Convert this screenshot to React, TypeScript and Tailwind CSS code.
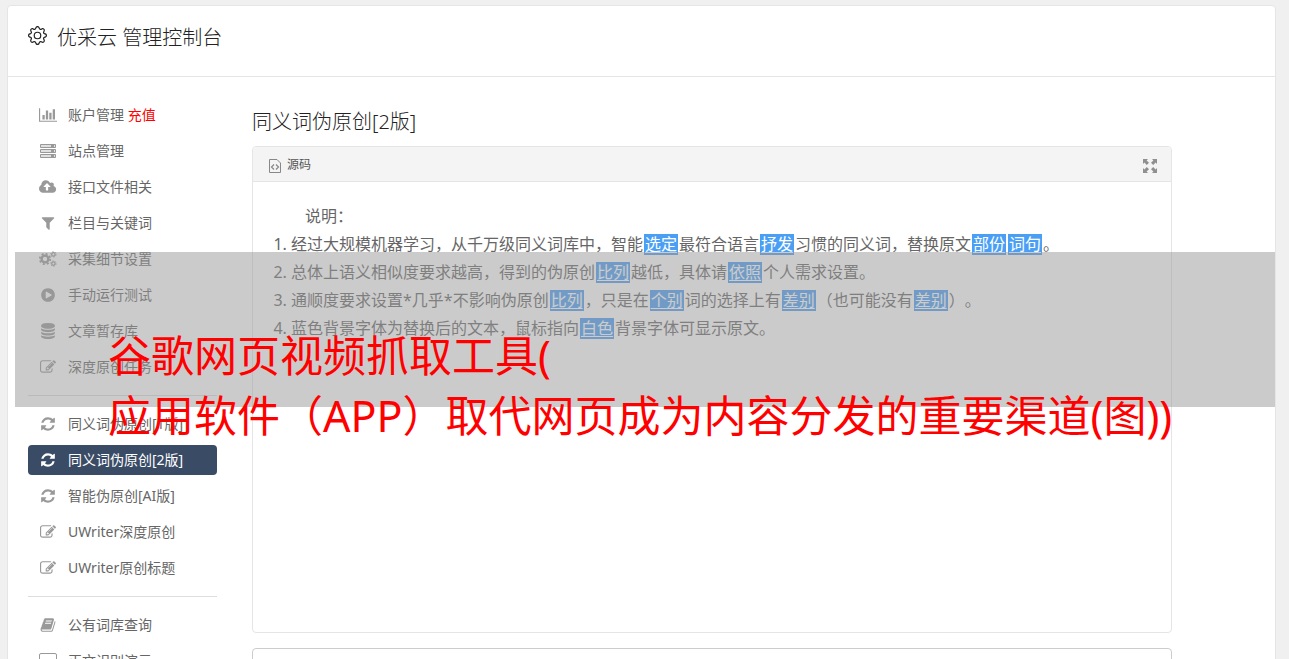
import React from "react";
import { BsGear } from "react-icons/bs";

type IconProps = {
  name: string;
};

const icons: Record<string, { width: number; path: string }> = {
  chart: {
    width: 2048,
    path: "M640 896v512h-256v-512h256zm384-512v1024h-256v-1024h256zm1024 1152v128h-2048v-1536h128v1408h1920zm-640-896v768h-256v-768h256zm384-384v1152h-256v-1152h256z",
  },
  cloud: {
    width: 1920,
    path: "M1280 864q0-14-9-23l-352-352q-9-9-23-9t-23 9l-351 351q-10 12-10 24 0 14 9 23t23 9h224v352q0 13 9.5 22.5t22.5 9.5h192q13 0 22.5-9.5t9.5-22.5v-352h224q13 0 22.5-9.5t9.5-22.5zm640 288q0 159-112.5 271.5t-271.5 112.5h-1088q-185 0-316.5-131.5t-131.5-316.5q0-130 70-240t188-165q-2-30-2-43 0-212 150-362t362-150q156 0 285.5 87t188.5 231q71-62 166-62 106 0 181 75t75 181q0 76-41 138 130 31 213.5 135.5t83.5 238.5z",
  },
  filter: {
    width: 1792,
    path: "M1595 295q17 41-14 70l-493 493v742q0 42-39 59-13 5-25 5-27 0-45-19l-256-256q-19-19-19-45v-486l-493-493q-31-29-14-70 17-39 59-39h1280q42 0 59 39z",
  },
  play: {
    width: 1792,
    path: "M896 128q209 0 385.5 103t279.5 279.5 103 385.5-103 385.5-279.5 279.5-385.5 103-385.5-103-279.5-279.5-103-385.5 103-385.5 279.5-279.5 385.5-103zm384 823q32-18 32-55t-32-55l-544-320q-31-19-64-1-32 19-32 56v640q0 37 32 56 16 8 32 8 17 0 32-9z",
  },
  database: {
    width: 1792,
    path: "M896 768q237 0 443-43t325-127v170q0 69-103 128t-280 93.5-385 34.5-385-34.5-280-93.5-103-128v-170q119 84 325 127t443 43zm0 768q237 0 443-43t325-127v170q0 69-103 128t-280 93.5-385 34.5-385-34.5-280-93.5-103-128v-170q119 84 325 127t443 43zm0-384q237 0 443-43t325-127v170q0 69-103 128t-280 93.5-385 34.5-385-34.5-280-93.5-103-128v-170q119 84 325 127t443 43zm0-1152q208 0 385 34.5t280 93.5 103 128v128q0 69-103 128t-280 93.5-385 34.5-385-34.5-280-93.5-103-128v-128q0-69 103-128t280-93.5 385-34.5z",
  },
  edit: {
    width: 1792,
    path: "M888 1184l116-116-152-152-116 116v56h96v96h56zm440-720q-16-16-33 1l-350 350q-17 17-1 33t33-1l350-350q17-17 1-33zm80 594v190q0 119-84.5 203.5t-203.5 84.5h-832q-119 0-203.5-84.5t-84.5-203.5v-832q0-119 84.5-203.5t203.5-84.5h832q63 0 117 25 15 7 18 23 3 17-9 29l-49 49q-14 14-32 8-23-6-45-6h-832q-66 0-113 47t-47 113v832q0 66 47 113t113 47h832q66 0 113-47t47-113v-126q0-13 9-22l64-64q15-15 35-7t20 29zm-96-738l288 288-672 672h-288v-288zm444 132l-92 92-288-288 92-92q28-28 68-28t68 28l152 152q28 28 28 68t-28 68z",
  },
  refresh: {
    width: 1792,
    path: "M1639 1056q0 5-1 7-64 268-268 434.5t-478 166.5q-146 0-282.5-55t-243.5-157l-129 129q-19 19-45 19t-45-19-19-45v-448q0-26 19-45t45-19h448q26 0 45 19t19 45-19 45l-137 137q71 66 161 102t187 36q134 0 250-65t186-179q11-17 53-117 8-23 30-23h192q13 0 22.5 9.5t9.5 22.5zm25-800v448q0 26-19 45t-45 19h-448q-26 0-45-19t-19-45 19-45l138-138q-148-137-349-137-134 0-250 65t-186 179q-11 17-53 117-8 23-30 23h-199q-13 0-22.5-9.5t-9.5-22.5v-7q65-268 270-434.5t480-166.5q146 0 284 55.5t245 156.5l130-129q19-19 45-19t45 19 19 45z",
  },
  book: {
    width: 1792,
    path: "M1703 478q40 57 18 129l-275 906q-19 64-76.5 107.5t-122.5 43.5h-923q-77 0-148.5-53.5t-99.5-131.5q-24-67-2-127 0-4 3-27t4-37q1-8-3-21.5t-3-19.5q2-11 8-21t16.5-23.5 16.5-23.5q23-38 45-91.5t30-91.5q3-10 .5-30t-.5-28q3-11 17-28t17-23q21-36 42-92t25-90q1-9-2.5-32t.5-28q4-13 22-30.5t22-22.5q19-26 42.5-84.5t27.5-96.5q1-8-3-25.5t-2-26.5q2-8 9-18t18-23 17-21q8-12 16.5-30.5t15-35 16-36 19.5-32 26.5-23.5 36-11.5 47.5 5.5l-1 3q38-9 51-9h761q74 0 114 56t18 130l-274 906q-36 119-71.5 153.5t-128.5 34.5h-869q-27 0-38 15-11 16-1 43 24 70 144 70h923q29 0 56-15.5t35-41.5l300-987q7-22 5-57 38 15 59 43zm-1064 2q-4 13 2 22.5t20 9.5h608q13 0 25.5-9.5t16.5-22.5l21-64q4-13-2-22.5t-20-9.5h-608q-13 0-25.5 9.5t-16.5 22.5zm-83 256q-4 13 2 22.5t20 9.5h608q13 0 25.5-9.5t16.5-22.5l21-64q4-13-2-22.5t-20-9.5h-608q-13 0-25.5 9.5t-16.5 22.5z",
  },
};

const Icon: React.FC<IconProps> = ({ name }) => {
  if (name === "server") {
    return (
      <svg viewBox="0 0 16 16" className="h-4" fill="none" stroke="currentColor">
        <path d="M.5 1.5h15v3H.5zM.5 6.5h15v3H.5zM.5 11.5h15v3H.5z" fill="currentColor" fillOpacity=".3" />
        <path d="M11 3h3M11 8h3M11 13h3" strokeWidth="2" />
      </svg>
    );
  }
  if (name === "cogs") {
    return (
      <svg viewBox="0 0 18 16" className="h-4" fill="none" stroke="currentColor">
        <circle cx="6" cy="8" r="3.4" strokeWidth="2.4" />
        <circle cx="6" cy="8" r="5.2" strokeWidth="1.8" strokeDasharray="2.04 2.04" />
        <circle cx="14.4" cy="3.4" r="1.7" strokeWidth="1.3" />
        <circle cx="14.4" cy="3.4" r="2.7" strokeWidth="1" strokeDasharray="1.2 1.63" />
        <circle cx="14.4" cy="12.6" r="1.7" strokeWidth="1.3" />
        <circle cx="14.4" cy="12.6" r="2.7" strokeWidth="1" strokeDasharray="1.2 1.63" />
      </svg>
    );
  }
  if (name === "desktop") {
    return (
      <svg viewBox="0 0 18 16" className="h-4" fill="none" stroke="currentColor">
        <rect x=".5" y=".5" width="17" height="12" rx="1.5" />
        <path d="M5 15h8M9 12v3" strokeWidth="2" />
      </svg>
    );
  }
  const icon = icons[name];
  return (
    <svg viewBox={`0 0 ${icon.width} 1792`} className="h-4" fill="currentColor">
      <path d={icon.path} />
    </svg>
  );
};

type MenuItem = {
  icon: string;
  label: string;
  extra?: string;
  active?: boolean;
};

const menu: MenuItem[][] = [
  [
    { icon: "chart", label: "账户管理", extra: "充值" },
    { icon: "server", label: "站点管理" },
    { icon: "cloud", label: "接口文件相关" },
    { icon: "filter", label: "栏目与关键词" },
    { icon: "cogs", label: "采集细节设置" },
    { icon: "play", label: "手动运行测试" },
    { icon: "database", label: "文章暂存库" },
    { icon: "edit", label: "深度原创任务" },
  ],
  [
    { icon: "refresh", label: "同义词伪原创[1版]" },
    { icon: "refresh", label: "同义词伪原创[2版]", active: true },
    { icon: "refresh", label: "智能伪原创[AI版]" },
    { icon: "edit", label: "UWriter深度原创" },
    { icon: "edit", label: "UWriter原创标题" },
  ],
  [
    { icon: "book", label: "公有词库查询" },
    { icon: "desktop", label: "正文识别演示" },
  ],
];

const Sidebar = () => (
  <nav className="w-[189px] shrink-0 divide-y divide-[#ddd] text-sm">
    {menu.map((group, i) => (
      <ul key={i} className="space-y-1.5 py-[13px] first:pt-0">
        {group.map((item) => (
          <li key={item.label}>
            <a
              href="#"
              className={
                item.active
                  ? "flex h-[30px] items-center rounded bg-[#3a4b66] text-white"
                  : "flex h-[30px] items-center rounded text-[#666]"
              }
            >
              <span
                className={
                  item.active
                    ? "flex w-10 justify-center"
                    : "flex w-10 justify-center text-[#999]"
                }
              >
                <Icon name={item.icon} />
              </span>
              <span className="whitespace-nowrap">
                {item.label}
                {item.extra && <span className="text-[#f00]"> {item.extra}</span>}
              </span>
            </a>
          </li>
        ))}
      </ul>
    ))}
  </nav>
);

const Word = ({ children }: { children: React.ReactNode }) => (
  <span className="mx-px inline-block bg-[#4a9ff5] px-px leading-[21px] text-white underline underline-offset-2">
    {children}
  </span>
);

const SourcePanel = () => (
  <section className="h-[487px] rounded border border-[#e5e5e5] text-[#666]">
    <header className="flex h-[35px] items-center justify-between rounded-t border-b border-[#e5e5e5] bg-[#f4f4f4] pr-3.5 pl-4">
      <h3 className="flex items-center gap-1.5 pt-0.5 text-xs text-[#555]">
        <svg viewBox="0 0 12 14" className="mt-0.5 h-3.5 w-3" fill="none" stroke="#888">
          <path d="M.5.5h7.500l3.500 3.500v9.500H.5z" />
          <path d="M5 5.500L2.500 8 5 10.500M7 5.500L9.500 8 7 10.500" strokeWidth="1.200" />
        </svg>
        源码
      </h3>
      <button type="button" aria-label="全屏" className="mt-1 text-[#909090]">
        <svg viewBox="0 0 14 14" className="size-3.5" fill="currentColor">
          <path d="M0 0h5L3.600 1.400 6 3.800 3.800 6 1.400 3.600 0 5zM14 0v5l-1.400-1.400L10.200 6 8 3.800l2.400-2.400L9 0zM0 14V9l1.400 1.400L3.800 8 6 10.200l-2.400 2.400L5 14zM14 14H9l1.400-1.400L8 10.200 10.200 8l2.400 2.400L14 9z" />
        </svg>
      </button>
    </header>
    <div className="py-5 pl-[38px] text-base leading-7 [text-spacing-trim:space-all]">
      <p className="pl-3.5">说明：</p>
      <ol className="list-decimal">
        <li>
          经过大规模机器学习，从千万级同义词库中，智能<Word>选定</Word>最符合语言<Word>抒发</Word>
          习惯的同义词，替换原文<Word>部份</Word><Word>词句</Word>。
        </li>
        <li>
          总体上语义相似度要求越高，得到的伪原创<Word>比列</Word>越低，具体请<Word>依照</Word>
          个人需求设置。
        </li>
        <li>
          通顺度要求设置*几乎*不影响伪原创<Word>比列</Word>，只是在<Word>个别</Word>
          词的选择上有<Word>差别</Word>（也可能没有<Word>差别</Word>）。
        </li>
        <li>
          蓝色背景字体为替换后的文本，鼠标指向<Word>白色</Word>背景字体可显示原文。
        </li>
      </ol>
    </div>
  </section>
);

const Banner = () => (
  <div className="absolute top-[252px] right-3.5 left-[15px] h-[155px] bg-[#979797]/50 pt-[74px] pl-[93px] text-[43px] leading-[60px] whitespace-nowrap text-[#f00] [text-spacing-trim:space-all]">
    <p>谷歌网页视频抓取工具(</p>
    <p>应用软件（APP）取代网页成为内容分发的重要渠道(图))</p>
  </div>
);

export default function App() {
  return (
    <div className="relative h-screen overflow-hidden bg-[#f0f0f0] pt-[5px] pr-[13px] pl-[7px] font-['Noto_Sans','Noto_Sans_CJK_SC',sans-serif]">
      <div className="rounded border border-[#e5e5e5] bg-white">
        <header className="flex h-[71px] items-start gap-2.5 border-b border-[#e5e5e5] pt-4 pl-5 text-[#222]">
          <BsGear className="mt-1 size-[19px]" />
          <h1 className="text-xl leading-8 font-light">优采云 管理控制台</h1>
        </header>
        <div className="flex gap-[35px] pt-[23px] pl-5">
          <Sidebar />
          <main className="min-w-0 flex-1 pr-[103px]">
            <h2 className="pt-1.5 pb-2 text-xl leading-8 font-light text-[#222]">同义词伪原创[2版]</h2>
            <SourcePanel />
            <section className="mt-[15px] h-[200px] rounded border border-[#ccc]"></section>
          </main>
        </div>
      </div>
      <Banner />
    </div>
  );
}
